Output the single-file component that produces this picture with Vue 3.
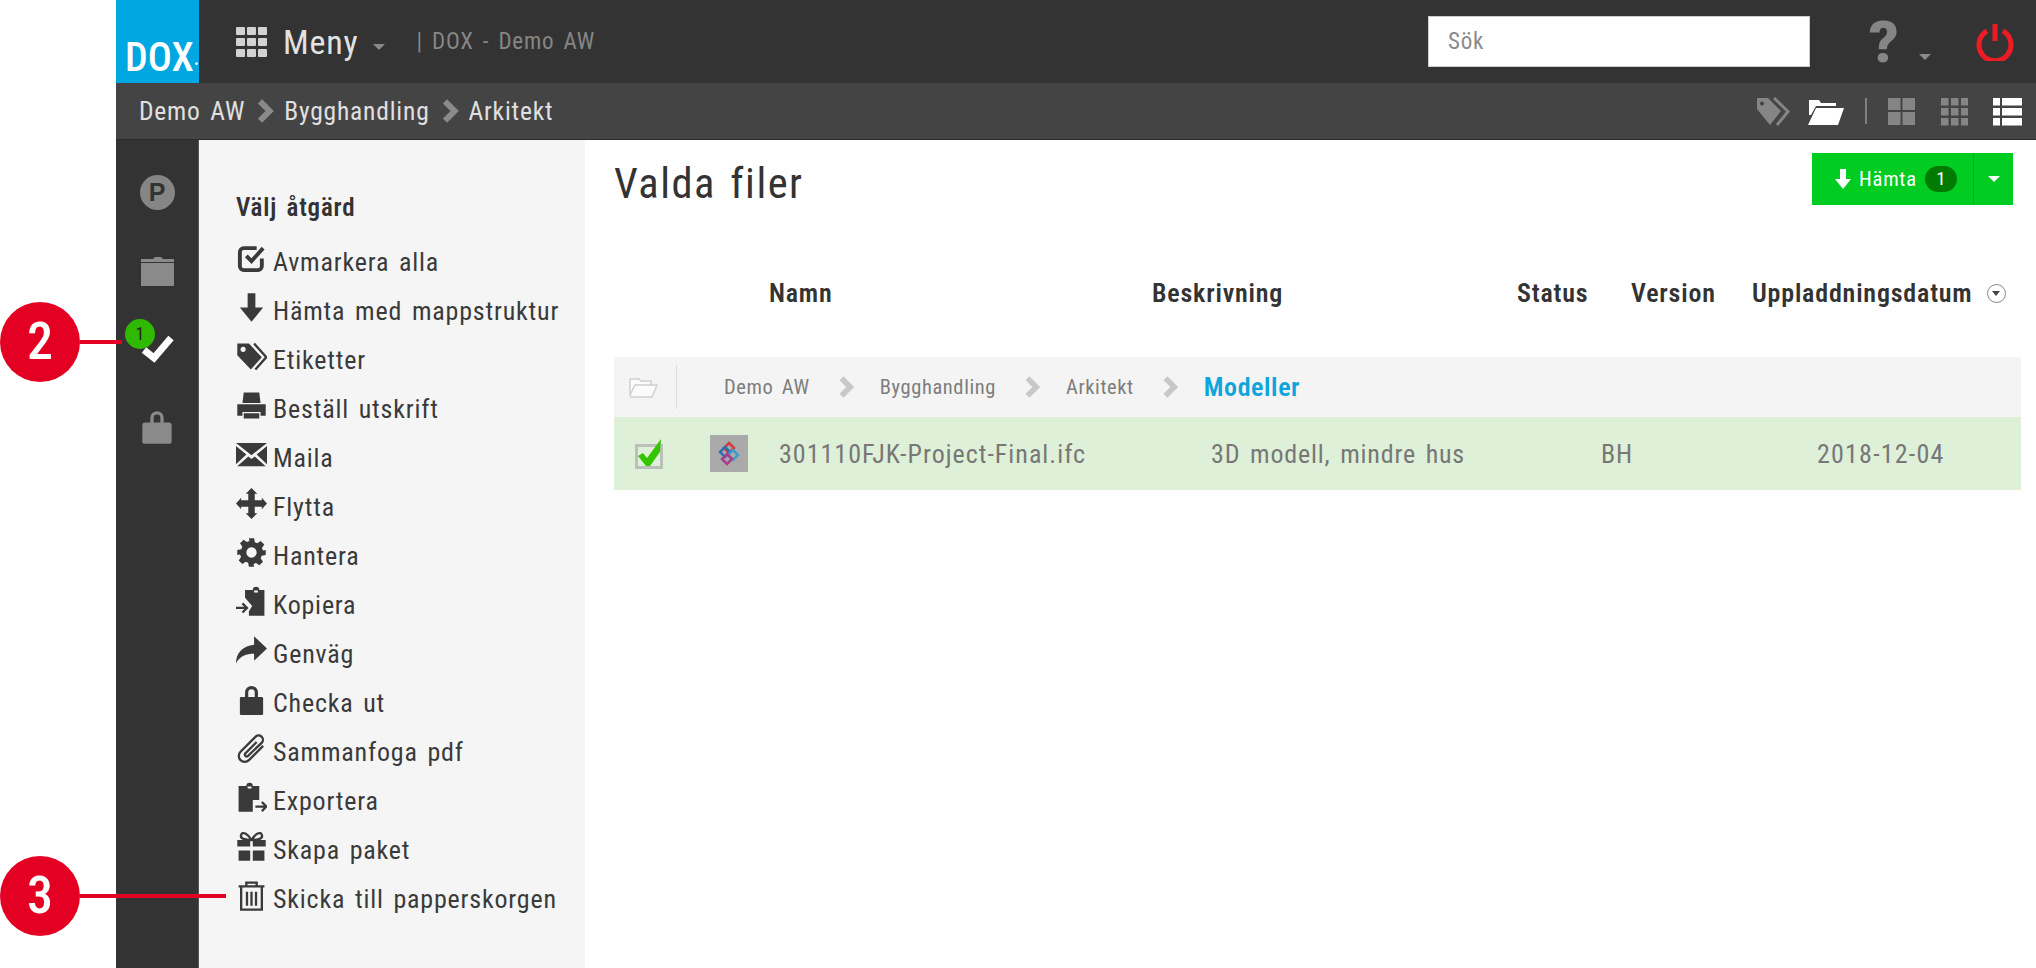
<script setup>
// åtgärdslistan i vänsterpanelen
const actions = [
  { label: 'Avmarkera alla', line: 'M20 12v6a3 3 0 0 1-3 3H6a3 3 0 0 1-3-3V7a3 3 0 0 1 3-3h10M8 10l4 4 9-10' },
  { label: 'Hämta med mappstruktur', fill: 'M9 1h6v11h6L12 23 3 12h6z' },
  { label: 'Etiketter', fill: 'M1 2h9l10 10.5-8.5 9.5L1 11zM5.5 4.5a2 2 0 1 0 .01 0z', line: 'M14 2l9.500 10.500L15 22', thin: true },
  { label: 'Beställ utskrift', fill: 'M6 2h12l1 8H5zM1 11h22v9h-4v-3H5v3H1zM6 18h12v4H6z' },
  { label: 'Maila', fill: 'M0 3h24L12 12.500zM0 5.500v14l8-7.500zM24 5.500v14l-8-7.500zM1 21l8.500-7.500 2.500 2 2.500-2L23 21z' },
  { label: 'Flytta', fill: 'M12 0l4.500 4.500h-2V9.500h5.500v-2L24 12l-4 4.500v-2h-5.500v5h2L12 24l-4.500-4.500h2v-5H4v2L0 12l4-4.500v2h5.500V4.500h-2z' },
  { label: 'Hantera', fill: 'M10 1h4l.6 3.100 1.900.8 2.600-1.800 2.800 2.800-1.800 2.600.8 1.900L23 10v4l-3.100.6-.8 1.900 1.800 2.600-2.800 2.800-2.600-1.800-1.900.8L14 23h-4l-.6-3.100-1.900-.8-2.600 1.800-2.800-2.800 1.800-2.600-.8-1.900L1 14v-4l3.100-.6.8-1.900-1.800-2.600 2.800-2.800 2.600 1.800 1.900-.8zM12 8a4 4 0 1 0 .01 0z' },
  { label: 'Kopiera', fill: 'M7 3h6a2.500 2.500 0 0 1 5 0h4v20H10v-3.500l2.500-4L7 9zM14 3.500h3V5h-3z', line: 'M0 17h8M5 13.500l3.500 3.500L5 20.500', thin: true },
  { label: 'Genväg', fill: 'M14 1l10 9.500-10 9.500v-5.500C8 14.500 3 16 0 22c0-8 5-13.500 14-14.500z' },
  { label: 'Checka ut', fill: 'M4 10h3V6.500a5 5 0 0 1 10 0V10h3a1 1 0 0 1 1 1v12a1 1 0 0 1-1 1H4a1 1 0 0 1-1-1V11a1 1 0 0 1 1-1zM9.500 10h5V6.500a2.500 2.500 0 0 0-5 0z' },
  { label: 'Sammanfoga pdf', line: 'M21 10L10 21a4.500 4.500 0 0 1-6.500-6.500L15 3a3.200 3.200 0 0 1 5 4.500L9 18a1.500 1.500 0 0 1-2-2l9-9', thin: true },
  { label: 'Exportera', fill: 'M2 3h6a2.500 2.500 0 0 1 5 0h5v11h-5v9H2zM9 3.500h3V5H9z', line: 'M15 19h8M20 15.500l3.500 3.500-3.500 3.500', thin: true },
  { label: 'Skapa paket', fill: 'M1 7h10v5H1zM13 7h10v5H13zM2 15h9v8H2zM13 15h9v8h-9z', line: 'M12 7C9 2 5 0 4 3s3 4 8 4M12 7c3-5 7-7 8-4s-3 4-8 4', thin: true },
  { label: 'Skicka till papperskorgen', line: 'M2 5h20M8 5V2h8v3M4 5v18h16V5M8.500 9v11M12 9v11M15.500 9v11', thin: true },
];

const folderPath = ['Demo AW', 'Bygghandling', 'Arkitekt'];

const columns = [
  { label: 'Namn', cls: 'col-name' },
  { label: 'Beskrivning', cls: 'col-desc' },
  { label: 'Status', cls: 'col-status' },
  { label: 'Version', cls: 'col-version' },
];
</script>

<template>
  <div class="page">
    <div class="gutter"></div>

    <div class="app">
      <header class="topbar">
        <div class="logo">DOX<span class="logo-dot">·</span></div>
        <svg class="menu-grid" viewBox="0 0 31 30">
          <rect v-for="n in 9" :key="n" :x="((n - 1) % 3) * 11" :y="Math.floor((n - 1) / 3) * 11" width="9" height="8" rx="1" />
        </svg>
        <span class="menu-label">Meny</span>
        <i class="caret caret-menu"></i>
        <span class="project">| DOX - Demo AW</span>
        <div class="search">Sök</div>
        <span class="help">?</span>
        <i class="caret caret-help"></i>
        <svg class="power" viewBox="0 0 38 38">
          <path d="M11 8a16 16 0 1 0 16 0" />
          <path d="M19 1v17" />
        </svg>
      </header>

      <div class="crumbbar">
        <template v-for="(c, i) in folderPath" :key="c">
          <svg v-if="i > 0" class="crumb-chev" viewBox="0 0 16 20"><path d="M3 2l8 8-8 8" /></svg>
          <span class="crumb">{{ c }}</span>
        </template>
        <div class="views">
          <svg class="view view-tag" viewBox="0 0 36 29">
            <path class="gray" d="M0 1h11l13 13-11 14L0 12zM5 4.500a2 2 0 1 0 .01 0z" fill-rule="evenodd" />
            <path class="gray-line" d="M17 1l14 13.500L20 28" />
          </svg>
          <svg class="view" viewBox="0 0 36 29">
            <path class="white" d="M1 6V3h10l2 3h15v3H8L3 18H1zM8 11h28l-6 17H0z" />
          </svg>
          <i class="views-sep"></i>
          <svg class="view-grid g2" viewBox="0 0 27 29">
            <path class="gray" d="M0 1h12.500v12H0zM14.500 1H27v12H14.500zM0 15h12.500v13H0zM14.500 15H27v13H14.500z" />
          </svg>
          <svg class="view-grid g3" viewBox="0 0 27 29">
            <rect v-for="n in 9" :key="n" class="gray" :x="((n - 1) % 3) * 10" :y="1 + Math.floor((n - 1) / 3) * 10" width="7.500" height="7.500" />
          </svg>
          <svg class="view-grid g4" viewBox="0 0 29 29">
            <path class="white" d="M0 1h7v7.500H0zM9 1h20v7.500H9zM0 11h7v7.500H0zM9 11h20v7.500H9zM0 21h7v7.500H0zM9 21h20v7.500H9z" />
          </svg>
        </div>
      </div>

      <div class="body">
        <nav class="rail">
          <div class="rail-item">
            <span class="rail-p">P</span>
          </div>
          <div class="rail-item">
            <svg class="rail-icon" viewBox="0 0 33 32">
              <path d="M0 9h33v23H0zM0 5h12l2-2h6l2 2h11v3H0z" fill="#8a8a8a" />
            </svg>
          </div>
          <div class="rail-item">
            <svg class="rail-icon" viewBox="0 0 33 32">
              <path d="M3 18l10 8L30 6" fill="none" stroke="#fff" stroke-width="7" />
            </svg>
            <span class="rail-badge">1</span>
          </div>
          <div class="rail-item">
            <svg class="rail-lock" viewBox="0 0 24 26">
              <path d="M3 10h4V6.500a5 5 0 0 1 10 0V10h4a2 2 0 0 1 2 2v12a2 2 0 0 1-2 2H3a2 2 0 0 1-2-2V12a2 2 0 0 1 2-2zM9.500 10h5V6.500a2.500 2.500 0 0 0-5 0z" fill="#8a8a8a" fill-rule="evenodd" />
            </svg>
          </div>
        </nav>

        <aside class="panel">
          <h3 class="panel-title">Välj åtgärd</h3>
          <ul class="actions">
            <li v-for="a in actions" :key="a.label" class="action">
              <svg class="action-icon" viewBox="0 0 24 24">
                <path v-if="a.fill" :d="a.fill" fill="#3a3a3a" fill-rule="evenodd" />
                <path v-if="a.line" :d="a.line" fill="none" stroke="#3a3a3a" :stroke-width="a.thin ? 1.800 : 3" />
              </svg>
              <span>{{ a.label }}</span>
            </li>
          </ul>
        </aside>

        <main class="main">
          <div class="main-head">
            <h1 class="title">Valda filer</h1>
            <div class="download">
              <div class="download-main">
                <svg class="download-arrow" viewBox="0 0 16 20"><path d="M5 0h6v10h5l-8 10-8-10h5z" fill="#fff" /></svg>
                <span>Hämta</span>
                <span class="download-badge">1</span>
              </div>
              <div class="download-drop"><i class="caret caret-white"></i></div>
            </div>
          </div>

          <div class="columns">
            <span v-for="c in columns" :key="c.label" :class="c.cls">{{ c.label }}</span>
            <span class="col-date">Uppladdningsdatum</span>
            <span class="sort"><i class="caret caret-sort"></i></span>
          </div>

          <div class="folder-row">
            <svg class="folder-icon" viewBox="0 0 30 24">
              <path d="M2 20V4h9l2 2h10v4M2 20l5-10h22l-5 12H3z" fill="#fbfbfb" stroke="#d0d0d0" stroke-width="1.500" />
            </svg>
            <i class="folder-sep"></i>
            <template v-for="c in folderPath" :key="c">
              <span class="folder-crumb">{{ c }}</span>
              <svg class="folder-chev" viewBox="0 0 16 20"><path d="M3 2l8 8-8 8" /></svg>
            </template>
            <span class="folder-current">Modeller</span>
          </div>

          <div class="file-row">
            <div class="check">
              <svg viewBox="0 0 30 30">
                <path d="M1.500 6.500h25v22h-25z" fill="none" stroke="#bcc0b8" stroke-width="3" />
                <path d="M3 17l5-3 4 5L26 0l-1 13-10 14h-4z" fill="#35c400" />
              </svg>
            </div>
            <div class="thumb">
              <svg viewBox="0 0 38 37">
                <path d="M19 8l5 5-5 5-5-5z" fill="none" stroke="#d23b3b" stroke-width="2.500" />
                <path d="M15 12l5 5-5 5-5-5z" fill="none" stroke="#2f6fb3" stroke-width="2.500" />
                <path d="M23 15l5 5-5 5-5-5z" fill="none" stroke="#3f9ec9" stroke-width="2.500" />
                <path d="M17 19l5 5-5 5-5-5z" fill="none" stroke="#a83d8e" stroke-width="2.500" />
              </svg>
            </div>
            <span class="file-name">301110FJK-Project-Final.ifc</span>
            <span class="file-desc">3D modell, mindre hus</span>
            <span class="file-status">BH</span>
            <span class="file-date">2018-12-04</span>
          </div>
        </main>
      </div>
    </div>

    <!-- numrerade markeringar ovanpå skärmbilden -->
    <div class="callout callout-2"><span class="callout-num">2</span><i class="callout-line line-2"></i></div>
    <div class="callout callout-3"><span class="callout-num">3</span><i class="callout-line line-3"></i></div>
  </div>
</template>

<style>
body {
  margin: 0;
  background: #fff;
}
</style>

<style scoped>
.page {
  position: relative;
  display: flex;
  width: 2036px;
  height: 968px;
  overflow: hidden;
  font-family: Roboto, "Liberation Sans", sans-serif;
  font-stretch: 75%;
  color: #333;
  letter-spacing: .8px;
  word-spacing: 3px;
}
.gutter {
  width: 116px;
  flex: none;
}
.app {
  flex: 1;
  display: flex;
  flex-direction: column;
  min-width: 0;
}

/* toppen */
.topbar {
  height: 83px;
  flex: none;
  display: flex;
  align-items: center;
  background: #333;
  padding-right: 22px;
}
.logo {
  width: 83px;
  height: 83px;
  flex: none;
  box-sizing: border-box;
  padding: 36px 0 0 9px;
  background: #00a7e1;
  color: #fff;
  font-size: 40px;
  font-weight: 500;
  line-height: 44px;
  letter-spacing: 0;
  white-space: nowrap;
}
.logo-dot {
  font-size: 20px;
}
.menu-grid {
  width: 31px;
  height: 30px;
  margin-left: 37px;
  fill: #d2d2d2;
}
.menu-label {
  margin-left: 16px;
  font-size: 34px;
  color: #e2e2e2;
}
.caret {
  display: block;
  width: 0;
  height: 0;
  border-left: 6px solid transparent;
  border-right: 6px solid transparent;
  border-top: 6px solid #8a8a8a;
}
.caret-menu {
  margin: 10px 0 0 15px;
}
.project {
  margin-left: 31px;
  font-size: 23px;
  color: #868686;
}
.search {
  margin-left: auto;
  width: 382px;
  height: 51px;
  box-sizing: border-box;
  padding-left: 19px;
  background: #fff;
  border: 1px solid #ccc;
  color: #8a8a8a;
  font-size: 23px;
  line-height: 49px;
}
.help {
  margin-left: 59px;
  width: 32px;
  font-stretch: 100%;
  font-weight: 900;
  font-size: 58px;
  line-height: 52px;
  color: #858585;
  letter-spacing: 0;
}
.caret-help {
  margin: 30px 0 0 18px;
}
.power {
  width: 38px;
  height: 38px;
  margin-left: 45px;
  fill: none;
  stroke: #ed1c24;
  stroke-width: 5;
}

.crumbbar {
  height: 57px;
  flex: none;
  display: flex;
  align-items: center;
  box-sizing: border-box;
  padding: 0 14px 0 23px;
  background: #444;
  border-bottom: 1px solid #2c2c2c;
}
.crumb {
  font-size: 25.500px;
  color: #e0e0e0;
}
.crumb-chev {
  width: 20px;
  height: 24px;
  margin: 0 8px 0 11px;
  fill: none;
  stroke: #8a8a8a;
  stroke-width: 5;
}
.views {
  margin-left: auto;
  display: flex;
  align-items: center;
}
.view {
  width: 36px;
  height: 29px;
  margin-right: 17px;
}
.view-tag {
  margin-right: 15px;
}
.gray {
  fill: #858585;
  fill-rule: evenodd;
}
.gray-line {
  fill: none;
  stroke: #858585;
  stroke-width: 3;
}
.white {
  fill: #fff;
}
.views-sep {
  width: 2px;
  height: 26px;
  margin: 0 21px 0 4px;
  background: #808080;
}
.view-grid {
  height: 29px;
  width: 27px;
}
.g3 {
  margin-left: 26px;
}
.g4 {
  width: 29px;
  margin-left: 25px;
}

/* innehåll */
.body {
  flex: 1;
  display: flex;
  min-height: 0;
}
.rail {
  width: 83px;
  flex: none;
  display: flex;
  flex-direction: column;
  box-sizing: border-box;
  padding-top: 13px;
  background: #333;
  border-right: 1px solid #555;
}
.rail-item {
  position: relative;
  height: 78px;
  display: flex;
  justify-content: center;
  align-items: center;
}
.rail-p {
  width: 35px;
  height: 35px;
  border-radius: 50%;
  background: #858585;
  color: #333;
  font-family: "Liberation Sans", sans-serif;
  font-weight: 700;
  font-size: 25px;
  line-height: 35px;
  text-align: center;
  letter-spacing: 0;
}
.rail-icon {
  width: 33px;
  height: 32px;
}
.rail-lock {
  width: 32px;
  height: 35px;
}
.rail-badge {
  position: absolute;
  left: 9px;
  top: 10px;
  width: 30px;
  height: 30px;
  border-radius: 50%;
  background: #2fb900;
  color: #222;
  font-size: 18px;
  line-height: 30px;
  text-align: center;
  letter-spacing: 0;
}
.panel {
  width: 386px;
  flex: none;
  box-sizing: border-box;
  padding: 54px 0 0 37px;
  background: #f5f5f5;
}
.panel-title {
  margin: 0 0 15px;
  font-size: 25px;
  font-weight: 600;
  line-height: 28px;
  color: #333;
}
.actions {
  margin: 0;
  padding: 0;
  list-style: none;
}
.action {
  height: 49px;
  display: flex;
  align-items: center;
  font-size: 26px;
  color: #3a3a3a;
  white-space: nowrap;
}
.action-icon {
  width: 31px;
  height: 31px;
  flex: none;
  margin: -6px 6px 0 0;
}

.main {
  flex: 1;
  min-width: 0;
  box-sizing: border-box;
  padding: 0 15px 0 29px;
}
.main-head {
  display: flex;
  justify-content: space-between;
  align-items: flex-start;
  height: 117px;
  padding-right: 8px;
}
.title {
  margin: 19px 0 0;
  font-size: 42.500px;
  font-weight: 400;
  line-height: 50px;
  color: #333;
  letter-spacing: 1.500px;
}
.download {
  margin-top: 13px;
  display: flex;
  height: 52px;
  background: #00cc22;
  color: #fff;
  font-size: 20.500px;
}
.download-main {
  width: 161px;
  display: flex;
  align-items: center;
  box-sizing: border-box;
  padding-left: 23px;
  gap: 8px;
}
.download-arrow {
  width: 16px;
  height: 20px;
}
.download-badge {
  width: 32px;
  height: 26px;
  border-radius: 13px;
  background: #007a00;
  font-size: 19px;
  line-height: 26px;
  text-align: center;
  letter-spacing: 0;
}
.download-drop {
  width: 39px;
  display: flex;
  justify-content: center;
  align-items: center;
  border-left: 1px solid #15a82c;
}
.caret-white {
  border-top-color: #fff;
}

.columns {
  height: 100px;
  display: flex;
  align-items: flex-start;
  padding-top: 18px;
  box-sizing: border-box;
  font-size: 26px;
  font-weight: 600;
  line-height: 36px;
  white-space: nowrap;
}
.col-name {
  margin-left: 155px;
  width: 383px;
}
.col-desc {
  width: 365px;
}
.col-status {
  width: 114px;
}
.col-version {
  width: 121px;
}
.sort {
  margin: 9px 0 0 14px;
  width: 19px;
  height: 19px;
  box-sizing: border-box;
  border: 1px solid #888;
  border-radius: 50%;
  display: flex;
  justify-content: center;
  align-items: center;
}
.caret-sort {
  border-left-width: 4px;
  border-right-width: 4px;
  border-top: 5px solid #444;
}

.folder-row {
  height: 60px;
  display: flex;
  align-items: center;
  box-sizing: border-box;
  padding-left: 14px;
  background: #f4f4f4;
  font-size: 20.500px;
  color: #7d7d7d;
  letter-spacing: .6px;
}
.folder-icon {
  width: 30px;
  height: 24px;
}
.folder-sep {
  width: 1px;
  height: 44px;
  margin: 0 47px 0 18px;
  background: #dcdcdc;
}
.folder-chev {
  width: 18px;
  height: 22px;
  margin: 0 24px 0 28px;
  fill: none;
  stroke: #c8c8c8;
  stroke-width: 5;
}
.folder-current {
  font-size: 26px;
  font-weight: 600;
  color: #0ea5dc;
}

.file-row {
  height: 73px;
  display: flex;
  align-items: center;
  background: #dff0d8;
  font-size: 26px;
  color: #777;
  white-space: nowrap;
}
.check {
  width: 96px;
  flex: none;
  box-sizing: border-box;
  padding: 0 0 0 21px;
  height: 30px;
}
.check svg {
  display: block;
  width: 30px;
  height: 30px;
}
.thumb {
  width: 38px;
  height: 37px;
  flex: none;
  background: #aaa;
}
.thumb svg {
  display: block;
}
.file-name {
  margin-left: 31px;
  width: 432px;
  letter-spacing: 1px;
}
.file-desc {
  width: 390px;
}
.file-status {
  width: 216px;
}
.file-date {
  letter-spacing: 1.200px;
}

/* markeringar */
.callout {
  position: absolute;
  left: 0;
  display: flex;
  align-items: center;
}
.callout-2 {
  top: 302px;
}
.callout-3 {
  top: 856px;
}
.callout-num {
  width: 80px;
  height: 80px;
  border-radius: 50%;
  background: #e30022;
  color: #fff;
  font-size: 52px;
  font-weight: 500;
  line-height: 80px;
  text-align: center;
  letter-spacing: 0;
}
.callout-line {
  height: 4px;
  background: #e30022;
}
.line-2 {
  width: 42px;
}
.line-3 {
  width: 146px;
}
</style>
